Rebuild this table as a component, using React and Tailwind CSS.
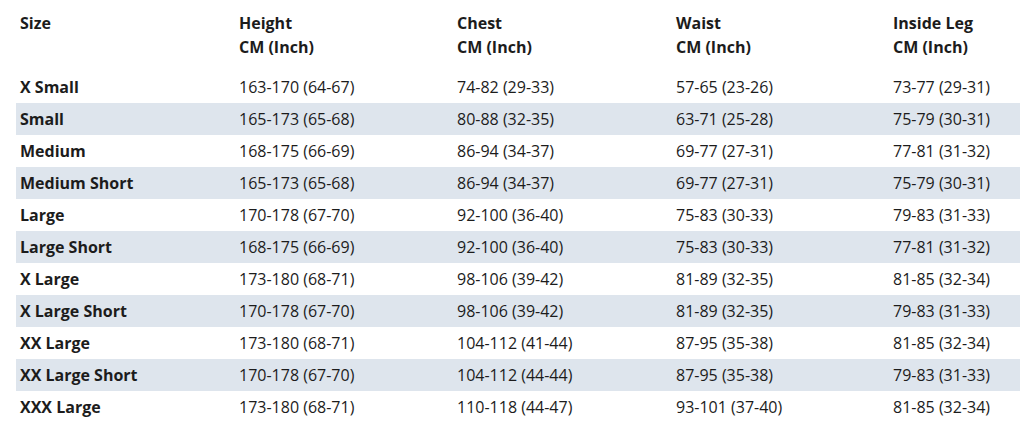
const headers = [
  ["Size", ""],
  ["Height", "CM (Inch)"],
  ["Chest", "CM (Inch)"],
  ["Waist", "CM (Inch)"],
  ["Inside Leg", "CM (Inch)"],
];

const rows = [
  ["X Small", "163-170 (64-67)", "74-82 (29-33)", "57-65 (23-26)", "73-77 (29-31)"],
  ["Small", "165-173 (65-68)", "80-88 (32-35)", "63-71 (25-28)", "75-79 (30-31)"],
  ["Medium", "168-175 (66-69)", "86-94 (34-37)", "69-77 (27-31)", "77-81 (31-32)"],
  ["Medium Short", "165-173 (65-68)", "86-94 (34-37)", "69-77 (27-31)", "75-79 (30-31)"],
  ["Large", "170-178 (67-70)", "92-100 (36-40)", "75-83 (30-33)", "79-83 (31-33)"],
  ["Large Short", "168-175 (66-69)", "92-100 (36-40)", "75-83 (30-33)", "77-81 (31-32)"],
  ["X Large", "173-180 (68-71)", "98-106 (39-42)", "81-89 (32-35)", "81-85 (32-34)"],
  ["X Large Short", "170-178 (67-70)", "98-106 (39-42)", "81-89 (32-35)", "79-83 (31-33)"],
  ["XX Large", "173-180 (68-71)", "104-112 (41-44)", "87-95 (35-38)", "81-85 (32-34)"],
  ["XX Large Short", "170-178 (67-70)", "104-112 (44-44)", "87-95 (35-38)", "79-83 (31-33)"],
  ["XXX Large", "173-180 (68-71)", "110-118 (44-47)", "93-101 (37-40)", "81-85 (32-34)"],
];

const cols = "grid grid-cols-[219px_218px_219px_217px_1fr]";

export default function App() {
  return (
    <div className="w-[1020px] h-[429px] bg-white pl-4 font-['Open_Sans',sans-serif] text-[16px] leading-6 text-[#1c1c1c] overflow-hidden">

      <div className={cols + " pt-[11px] pb-3 font-bold"}>
        {headers.map(([a, b]) => (
          <div key={a} className="px-1">
            <div>{a}</div>
            <div>{b}</div>
          </div>
        ))}
      </div>

      {rows.map((r, i) => (
        <div
          key={r[0]}
          className={cols + " h-8 items-center " + (i % 2 === 1 ? "bg-[#dee5ed]" : "")}
        >
          {r.map((c, j) => (
            <div key={j} className={"px-1 " + (j === 0 ? "font-bold" : "")}>
              {c}
            </div>
          ))}
        </div>
      ))}

    </div>
  );
}
